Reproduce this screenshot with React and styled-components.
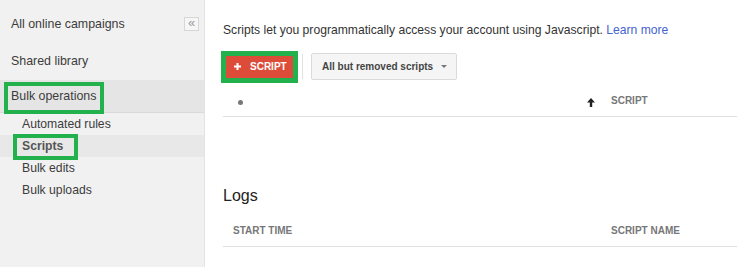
import React from "react";
import styled, { createGlobalStyle } from "styled-components";

const GlobalStyle = createGlobalStyle`
    html, body {
        margin: 0;
        padding: 0;
        background: #fff;
    }
    body {
        font-family: "Liberation Sans", Arial, sans-serif;
    }
`;

const navItems = [
    { label: "All online campaigns", height: 36, collapse: true },
    { label: "Shared library", height: 38 },
    { label: "Bulk operations", height: 33, active: true, mark: { t: -7, r: -8, b: -11, l: -7 } },
];

const subItems = [
    { label: "Automated rules" },
    { label: "Scripts", active: true, mark: { t: -5, r: -15, b: -7, l: -9 } },
    { label: "Bulk edits" },
    { label: "Bulk uploads" },
];

export default function App() {
    return (
        <>
            <GlobalStyle />
            <Page>
                <Sidebar>
                    {navItems.map((item) => (
                        <NavItem key={item.label} $height={item.height} $active={item.active}>
                            {item.mark ? <Marked $m={item.mark}>{item.label}</Marked> : item.label}
                            {item.collapse && <CollapseButton>«</CollapseButton>}
                        </NavItem>
                    ))}
                    <SubList>
                        {subItems.map((item) => (
                            <SubItem key={item.label} $active={item.active}>
                                {item.mark ? <Marked $m={item.mark}>{item.label}</Marked> : item.label}
                            </SubItem>
                        ))}
                    </SubList>
                </Sidebar>
                <Main>
                    <Intro>
                        Scripts let you programmatically access your account using Javascript.{" "}
                        <Link href="#">Learn more</Link>
                    </Intro>
                    <Toolbar>
                        <AddButton>
                            <svg width="7" height="7" viewBox="0 0 7 7">
                                <path d="M3.5 0v7M0 3.5h7" stroke="#fff" strokeWidth="2" />
                            </svg>
                            SCRIPT
                        </AddButton>
                        <Separator />
                        <FilterButton>
                            All but removed scripts
                            <Caret />
                        </FilterButton>
                    </Toolbar>
                    <HeaderRow>
                        <HeadCell $pad={15}>
                            <Dot />
                            <SortArrow width="8" height="9" viewBox="0 0 8 9">
                                <path d="M4 0L8 4.5H5.2V9H2.8V4.5H0z" fill="#222" />
                            </SortArrow>
                        </HeadCell>
                        <HeadCell>SCRIPT</HeadCell>
                    </HeaderRow>
                    <SectionTitle>Logs</SectionTitle>
                    <HeaderRow $top={4}>
                        <HeadCell $pad={10}>START TIME</HeadCell>
                        <HeadCell>SCRIPT NAME</HeadCell>
                    </HeaderRow>
                </Main>
            </Page>
        </>
    );
}

const Page = styled.div`
    display: flex;
    height: 267px;
    overflow: hidden;
`;
const Sidebar = styled.nav`
    width: 204px;
    flex-shrink: 0;
    background: #f1f1f1;
    border-right: 1px solid #e3e3e3;
    padding-top: 6px;
`;
const NavItem = styled.div`
    display: flex;
    align-items: center;
    height: ${(p) => p.$height}px;
    box-sizing: border-box;
    padding: 0 11px;
    font-size: 12.4px;
    color: #3c3c3c;
    background: ${(p) => (p.$active ? "#e5e5e5" : "transparent")};
    border-bottom: ${(p) => (p.$active ? "1px solid #dadada" : "none")};
`;
const CollapseButton = styled.span`
    margin-left: auto;
    margin-right: -6px;
    width: 13px;
    height: 12px;
    border: 1px solid #d6d6d6;
    background: #f6f6f6;
    color: #999;
    font-size: 13px;
    line-height: 10px;
    text-align: center;
`;
const Marked = styled.span`
    position: relative;
    display: inline-block;

    &::after {
        content: "";
        position: absolute;
        top: ${(p) => p.$m.t}px;
        right: ${(p) => p.$m.r}px;
        bottom: ${(p) => p.$m.b}px;
        left: ${(p) => p.$m.l}px;
        border: 4px solid #22b14c;
        pointer-events: none;
    }
`;
const SubList = styled.div`
    display: flex;
    flex-direction: column;
`;
const SubItem = styled.div`
    display: flex;
    align-items: center;
    height: 22px;
    padding-left: 22px;
    font-size: 12.2px;
    color: ${(p) => (p.$active ? "#555" : "#3c3c3c")};
    font-weight: ${(p) => (p.$active ? 700 : 400)};
    background: ${(p) => (p.$active ? "#e8e8e8" : "transparent")};
`;
const Main = styled.main`
    flex: 1;
    padding-left: 18px;
    display: flex;
    flex-direction: column;
    min-width: 0;
`;
const Intro = styled.p`
    margin: 21px 0 0;
    font-size: 12.15px;
    line-height: 18px;
    color: #333;
`;
const Link = styled.a`
    color: #4563d2;
    text-decoration: none;
`;
const Toolbar = styled.div`
    display: flex;
    align-items: center;
    height: 27px;
    margin-top: 14px;
`;
const AddButton = styled.button`
    display: flex;
    align-items: center;
    gap: 9px;
    width: 67px;
    height: 22px;
    margin-left: 3px;
    padding: 0 0 0 8px;
    border: none;
    border-radius: 0;
    background: #dd4b39;
    color: #fff;
    font-family: inherit;
    font-size: 10px;
    font-weight: 700;
    outline: 5px solid #22b14c;
`;
const Separator = styled.span`
    width: 1px;
    height: 25px;
    margin: 0 8px 0 9px;
    background: #e3e3e3;
`;
const FilterButton = styled.div`
    display: flex;
    align-items: center;
    width: 146px;
    height: 27px;
    box-sizing: border-box;
    padding-left: 10px;
    border: 1px solid #dadada;
    border-radius: 2px;
    background: #f5f5f5;
    color: #444;
    font-size: 10px;
    font-weight: 700;
`;
const Caret = styled.span`
    margin-left: 8px;
    border-left: 3px solid transparent;
    border-right: 3px solid transparent;
    border-top: 3px solid #777;
`;
const HeaderRow = styled.div`
    display: grid;
    grid-template-columns: 388px 1fr;
    align-items: end;
    height: 37px;
    box-sizing: border-box;
    margin-top: ${(p) => p.$top || 0}px;
    padding-bottom: 9px;
    border-bottom: 1px solid #e0e0e0;
`;
const HeadCell = styled.div`
    display: flex;
    align-items: center;
    padding-left: ${(p) => p.$pad || 0}px;
    font-size: 10px;
    line-height: 12px;
    font-weight: 700;
    color: #777;
`;
const Dot = styled.span`
    width: 5px;
    height: 5px;
    border-radius: 50%;
    background: #777;
`;
const SortArrow = styled.svg`
    margin-left: auto;
    margin-right: 16px;
`;
const SectionTitle = styled.h2`
    margin: 69px 0 0;
    font-size: 16px;
    line-height: 20px;
    font-weight: 400;
    color: #222;
`;
